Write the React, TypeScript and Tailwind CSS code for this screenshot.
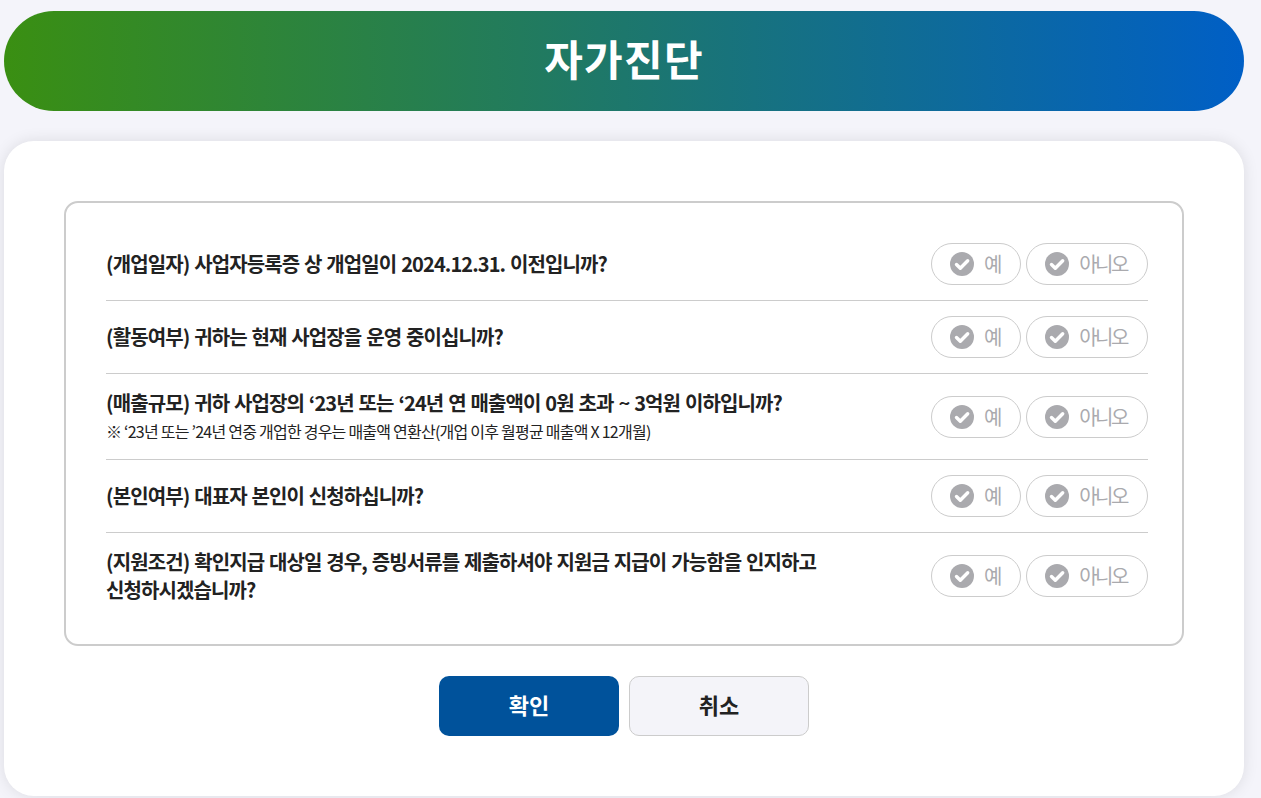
const questions = [
  { text: "(개업일자) 사업자등록증 상 개업일이 2024.12.31. 이전입니까?" },
  { text: "(활동여부) 귀하는 현재 사업장을 운영 중이십니까?" },
  {
    text: "(매출규모) 귀하 사업장의 ‘23년 또는 ‘24년 연 매출액이 0원 초과 ~ 3억원 이하입니까?",
    note: "※ ‘23년 또는 ’24년 연중 개업한 경우는 매출액 연환산(개업 이후 월평균 매출액 X 12개월)",
  },
  { text: "(본인여부) 대표자 본인이 신청하십니까?" },
  { text: "(지원조건) 확인지급 대상일 경우, 증빙서류를 제출하셔야 지원금 지급이 가능함을 인지하고 신청하시겠습니까?" },
];

function CheckIcon() {
  return (
    <svg width="24" height="24" viewBox="0 0 24 24" className="shrink-0">
      <circle cx="12" cy="12" r="12" fill="#aaaaae" />
      <path d="M6.5 12.5l3.8 3.8 7.4-7.6" fill="none" stroke="#fff" strokeWidth="3.4" strokeLinecap="round" strokeLinejoin="round" />
    </svg>
  );
}

function Choice({ label, width }: { label: string; width: string }) {
  return (
    <button className={`flex h-[42px] items-center justify-center gap-[10px] rounded-full border border-[#ccc] bg-white pr-[2px] text-[20px] font-normal tracking-[-0.13em] text-[#aaaaae] ${width}`}>
      <CheckIcon />
      {label}
    </button>
  );
}

export default function App() {
  return (
    <div className="min-h-screen bg-[#f4f4fa] pt-[11px] [font-family:'Noto_Sans_CJK_KR',sans-serif]">
      <div className="ml-1 w-[1240px]">
        <h1 className="flex h-[100px] items-center justify-center rounded-full bg-linear-to-r/srgb from-[#3a8f12] to-[#005fc6] pb-2 text-[42px] font-bold tracking-[0.03em] text-white">
          자가진단
        </h1>

        <div className="mt-[30px] rounded-[30px] bg-white p-[60px] shadow-[0_0_15px_rgba(0,0,0,0.1)]">
          <div className="rounded-[14px] border-2 border-[#ccc] py-[25px] pr-[34px] pl-[40px]">
            {questions.map((q, i) => (
              <div key={i} className="flex items-center justify-between border-b border-[#ccc] py-[15px] last:border-b-0">
                <div className="max-w-[725px] text-[20px] leading-[28px] font-semibold tracking-[-0.9px] [word-spacing:1.2px] break-keep text-[#222]">
                  <p>{q.text}</p>
                  {q.note && <p className="pt-[1px] text-[16px] leading-[26px] font-normal tracking-[-0.76px] [word-spacing:0]">{q.note}</p>}
                </div>
                <div className="flex gap-[5px]">
                  <Choice label="예" width="w-[90px]" />
                  <Choice label="아니오" width="w-[122px]" />
                </div>
              </div>
            ))}
          </div>

          <div className="mt-[30px] flex justify-center gap-[10px]">
            <button className="h-[60px] w-[180px] rounded-[10px] bg-[#00529b] pb-1 text-[22px] font-bold text-white">확인</button>
            <button className="h-[60px] w-[180px] rounded-[10px] border border-[#ccc] bg-[#f4f4f9] pb-1 text-[22px] font-bold text-[#222]">취소</button>
          </div>
        </div>
      </div>
    </div>
  );
}
